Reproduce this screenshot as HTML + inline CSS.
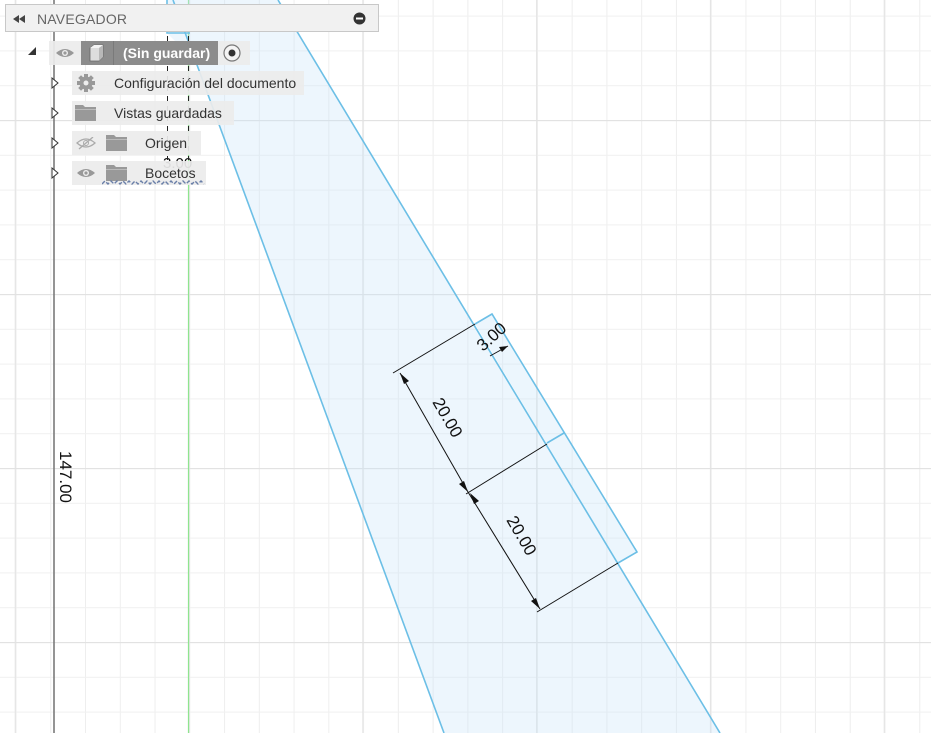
<!DOCTYPE html>
<html><head><meta charset="utf-8"><style>
html,body{margin:0;padding:0;width:931px;height:733px;overflow:hidden;background:#fff;font-family:"Liberation Sans",Arial,sans-serif}
svg.c{position:absolute;left:0;top:0}
.nav{position:absolute;left:5px;top:4px;width:374px;height:28px;background:#f1f1f1;border:1px solid #c8c8c8;box-sizing:border-box}
.nav .t{position:absolute;left:31px;top:6px;font-size:14px;color:#666;letter-spacing:0.2px}
.row{position:absolute;height:24px;background:rgba(236,236,236,0.92);font-size:14px;color:#333}
.row span{position:absolute;top:4px;white-space:nowrap}
</style></head><body>
<svg class="c" width="931" height="733" viewBox="0 0 931 733">
<defs>
<pattern id="mv" patternUnits="userSpaceOnUse" x="15.5" y="0" width="34.76" height="733"><rect x="0" y="0" width="1" height="733" fill="#eeeeee"/></pattern>
<pattern id="mh" patternUnits="userSpaceOnUse" x="0" y="15.6" width="931" height="34.8"><rect x="0" y="0" width="931" height="1" fill="#f0f0f0"/></pattern>
<pattern id="Mv" patternUnits="userSpaceOnUse" x="14.7" y="0" width="173.8" height="733"><rect x="0" y="0" width="1.2" height="733" fill="#e4e4e4"/></pattern>
<pattern id="Mh" patternUnits="userSpaceOnUse" x="0" y="120" width="931" height="174"><rect x="0" y="0" width="931" height="1.2" fill="#e2e2e2"/></pattern>
</defs>
<rect width="931" height="733" fill="url(#mv)"/>
<rect width="931" height="733" fill="url(#mh)"/>
<rect width="931" height="733" fill="url(#Mv)"/>
<rect width="931" height="733" fill="url(#Mh)"/>
<line x1="188.5" y1="0" x2="188.5" y2="733" stroke="#8fe58f" stroke-width="1.2"/>
<line x1="54" y1="0" x2="54" y2="733" stroke="#7a7a7a" stroke-width="1.6"/>
<polygon points="167,0 278,0 720,733 444,733 197,63 167,33" fill="rgba(200,228,248,0.32)"/>
<polygon points="475,324 492,314 637,552 618,563" fill="rgba(200,228,248,0.35)"/>
<g stroke="#6cbfe6" stroke-width="1.6" fill="none">
<line x1="278" y1="0" x2="720" y2="733"/>
<polyline points="167,0 167,33 190,33"/>
<line x1="173" y1="0" x2="444" y2="733"/>
<polyline points="475,324 492,314 637,552 618,563"/>
<line x1="564" y1="433" x2="547" y2="443"/>
</g>
<g stroke="#111" stroke-width="1" fill="#111">
<line x1="393" y1="373" x2="475" y2="324"/>
<line x1="400" y1="373" x2="468" y2="492"/>
<line x1="466" y1="494" x2="547" y2="444"/>
<line x1="468" y1="492" x2="540" y2="609"/>
<line x1="537" y1="612" x2="618" y2="563"/>
<line x1="490" y1="356" x2="508" y2="346"/>
<polygon points="400,373 409,381 404,384" stroke="none"/>
<polygon points="468,492 459,484 464,481" stroke="none"/>
<polygon points="470,493 479,501 474,504" stroke="none"/>
<polygon points="540,609 531,601 536,598" stroke="none"/>
<polygon points="508,346 499,347 502,352" stroke="none"/>
</g>
<g font-family="Liberation Sans,Arial,sans-serif" font-size="17" fill="#111">
<text transform="translate(432,402) rotate(60)">20.00</text>
<text transform="translate(506,520) rotate(60)">20.00</text>
<text transform="translate(483,352) rotate(-42)">3.00</text>
<text transform="translate(60,451) rotate(90)">147.00</text>
<text x="163" y="168" font-size="15">3.00</text>
</g>
<g stroke="#222" stroke-width="1" stroke-dasharray="5,5">
<line x1="167.5" y1="36" x2="167.5" y2="160"/>
<line x1="188.5" y1="36" x2="188.5" y2="160"/>
</g>
</svg>

<div class="nav">
 <svg style="position:absolute;left:7px;top:10px" width="14" height="8"><polygon points="0,4 6,0 6,8" fill="#444"/><polygon points="6,4 12,0 12,8" fill="#444"/></svg>
 <div class="t">NAVEGADOR</div>
 <svg style="position:absolute;left:347px;top:7px" width="13" height="13"><circle cx="6.5" cy="6.5" r="6" fill="#333"/><rect x="3" y="5.5" width="7" height="2" fill="#fff"/></svg>
</div>

<svg style="position:absolute;left:28px;top:47px" width="9" height="9"><polygon points="8,0 8,8 0,8" fill="#333"/></svg>
<div class="row" style="left:49px;top:41px;width:201px">
 <svg style="position:absolute;left:6px;top:6px" width="20" height="12"><path d="M1,6 Q10,-2 19,6 Q10,14 1,6Z" fill="#999"/><circle cx="10" cy="6" r="3" fill="#eee"/><circle cx="10" cy="6" r="1.6" fill="#999"/></svg>
 <div style="position:absolute;left:32px;top:0;width:137px;height:24px;background:#8c8c8c"></div>
 <svg style="position:absolute;left:38px;top:3px" width="18" height="18"><polygon points="3,4 7,1 16,1 16,13 12,17 3,17" fill="#ddd" stroke="#666" stroke-width="0.8"/><polygon points="3,4 7,1 16,1 12,4" fill="#f4f4f4"/><polygon points="12,4 16,1 16,13 12,17" fill="#b8b8b8"/></svg>
 <div style="position:absolute;left:64px;top:0;width:1px;height:24px;background:#7a7a7a"></div>
 <span style="left:74px;color:#fff;font-weight:bold">(Sin guardar)</span>
 <svg style="position:absolute;left:174px;top:3px" width="18" height="18"><circle cx="9" cy="9" r="8" fill="#f4f4f4" stroke="#777" stroke-width="1.2"/><circle cx="9" cy="9" r="3.5" fill="#333"/></svg>
</div>

<svg style="position:absolute;left:51px;top:77px" width="9" height="12"><polygon points="1,1 7,6 1,11" fill="#fff" stroke="#333"/></svg>
<svg style="position:absolute;left:51px;top:107px" width="9" height="12"><polygon points="1,1 7,6 1,11" fill="#fff" stroke="#333"/></svg>
<svg style="position:absolute;left:51px;top:137px" width="9" height="12"><polygon points="1,1 7,6 1,11" fill="#fff" stroke="#333"/></svg>
<svg style="position:absolute;left:51px;top:167px" width="9" height="12"><polygon points="1,1 7,6 1,11" fill="#fff" stroke="#333"/></svg>

<div class="row" style="left:72px;top:71px;width:232px">
 <svg style="position:absolute;left:4px;top:2px" width="20" height="20"><g fill="#999"><circle cx="10" cy="10" r="6.5"/><rect x="8" y="1" width="4" height="18"/><rect x="1" y="8" width="18" height="4"/><rect x="8" y="1" width="4" height="18" transform="rotate(45 10 10)"/><rect x="8" y="1" width="4" height="18" transform="rotate(-45 10 10)"/></g><circle cx="10" cy="10" r="2.5" fill="#eee"/></svg>
 <span style="left:42px">Configuración del documento</span>
</div>
<div class="row" style="left:72px;top:101px;width:162px">
 <svg style="position:absolute;left:3px;top:4px" width="22" height="17"><path d="M0,0 H8 L10,2 H21 V16 H0Z" fill="#999"/><rect x="0" y="4" width="21" height="1" fill="#bbb"/></svg>
 <span style="left:42px">Vistas guardadas</span>
</div>
<div class="row" style="left:72px;top:131px;width:129px">
 <svg style="position:absolute;left:4px;top:6px" width="20" height="13"><path d="M1,6 Q10,-2 19,6 Q10,14 1,6Z" fill="none" stroke="#aaa" stroke-width="1.3"/><circle cx="10" cy="6" r="2.5" fill="none" stroke="#aaa"/><line x1="3" y1="12" x2="17" y2="0" stroke="#aaa" stroke-width="1.3"/></svg>
 <svg style="position:absolute;left:34px;top:4px" width="22" height="17"><path d="M0,0 H8 L10,2 H21 V16 H0Z" fill="#999"/><rect x="0" y="4" width="21" height="1" fill="#bbb"/></svg>
 <span style="left:73px">Origen</span>
</div>
<div class="row" style="left:72px;top:161px;width:134px">
 <svg style="position:absolute;left:4px;top:6px" width="20" height="12"><path d="M1,6 Q10,-2 19,6 Q10,14 1,6Z" fill="#999"/><circle cx="10" cy="6" r="3" fill="#eee"/><circle cx="10" cy="6" r="1.6" fill="#999"/></svg>
 <svg style="position:absolute;left:34px;top:4px" width="22" height="17"><path d="M0,0 H8 L10,2 H21 V16 H0Z" fill="#999"/><rect x="0" y="4" width="21" height="1" fill="#bbb"/></svg>
 <span style="left:73px">Bocetos</span>
 <svg style="position:absolute;left:30px;top:19px" width="105" height="5"><path d="M0,4 l3,-3 l3,3 l3,-3 l3,3 l3,-3 l3,3 l3,-3 l3,3 l3,-3 l3,3 l3,-3 l3,3 l3,-3 l3,3 l3,-3 l3,3 l3,-3 l3,3 l3,-3 l3,3 l3,-3 l3,3 l3,-3 l3,3 l3,-3 l3,3 l3,-3 l3,3 l3,-3 l3,3 l3,-3 l3,3 l3,-3 l3,3" fill="none" stroke="#6a7fa8" stroke-width="1.4" stroke-dasharray="4,2"/></svg>
</div>
</body></html>
